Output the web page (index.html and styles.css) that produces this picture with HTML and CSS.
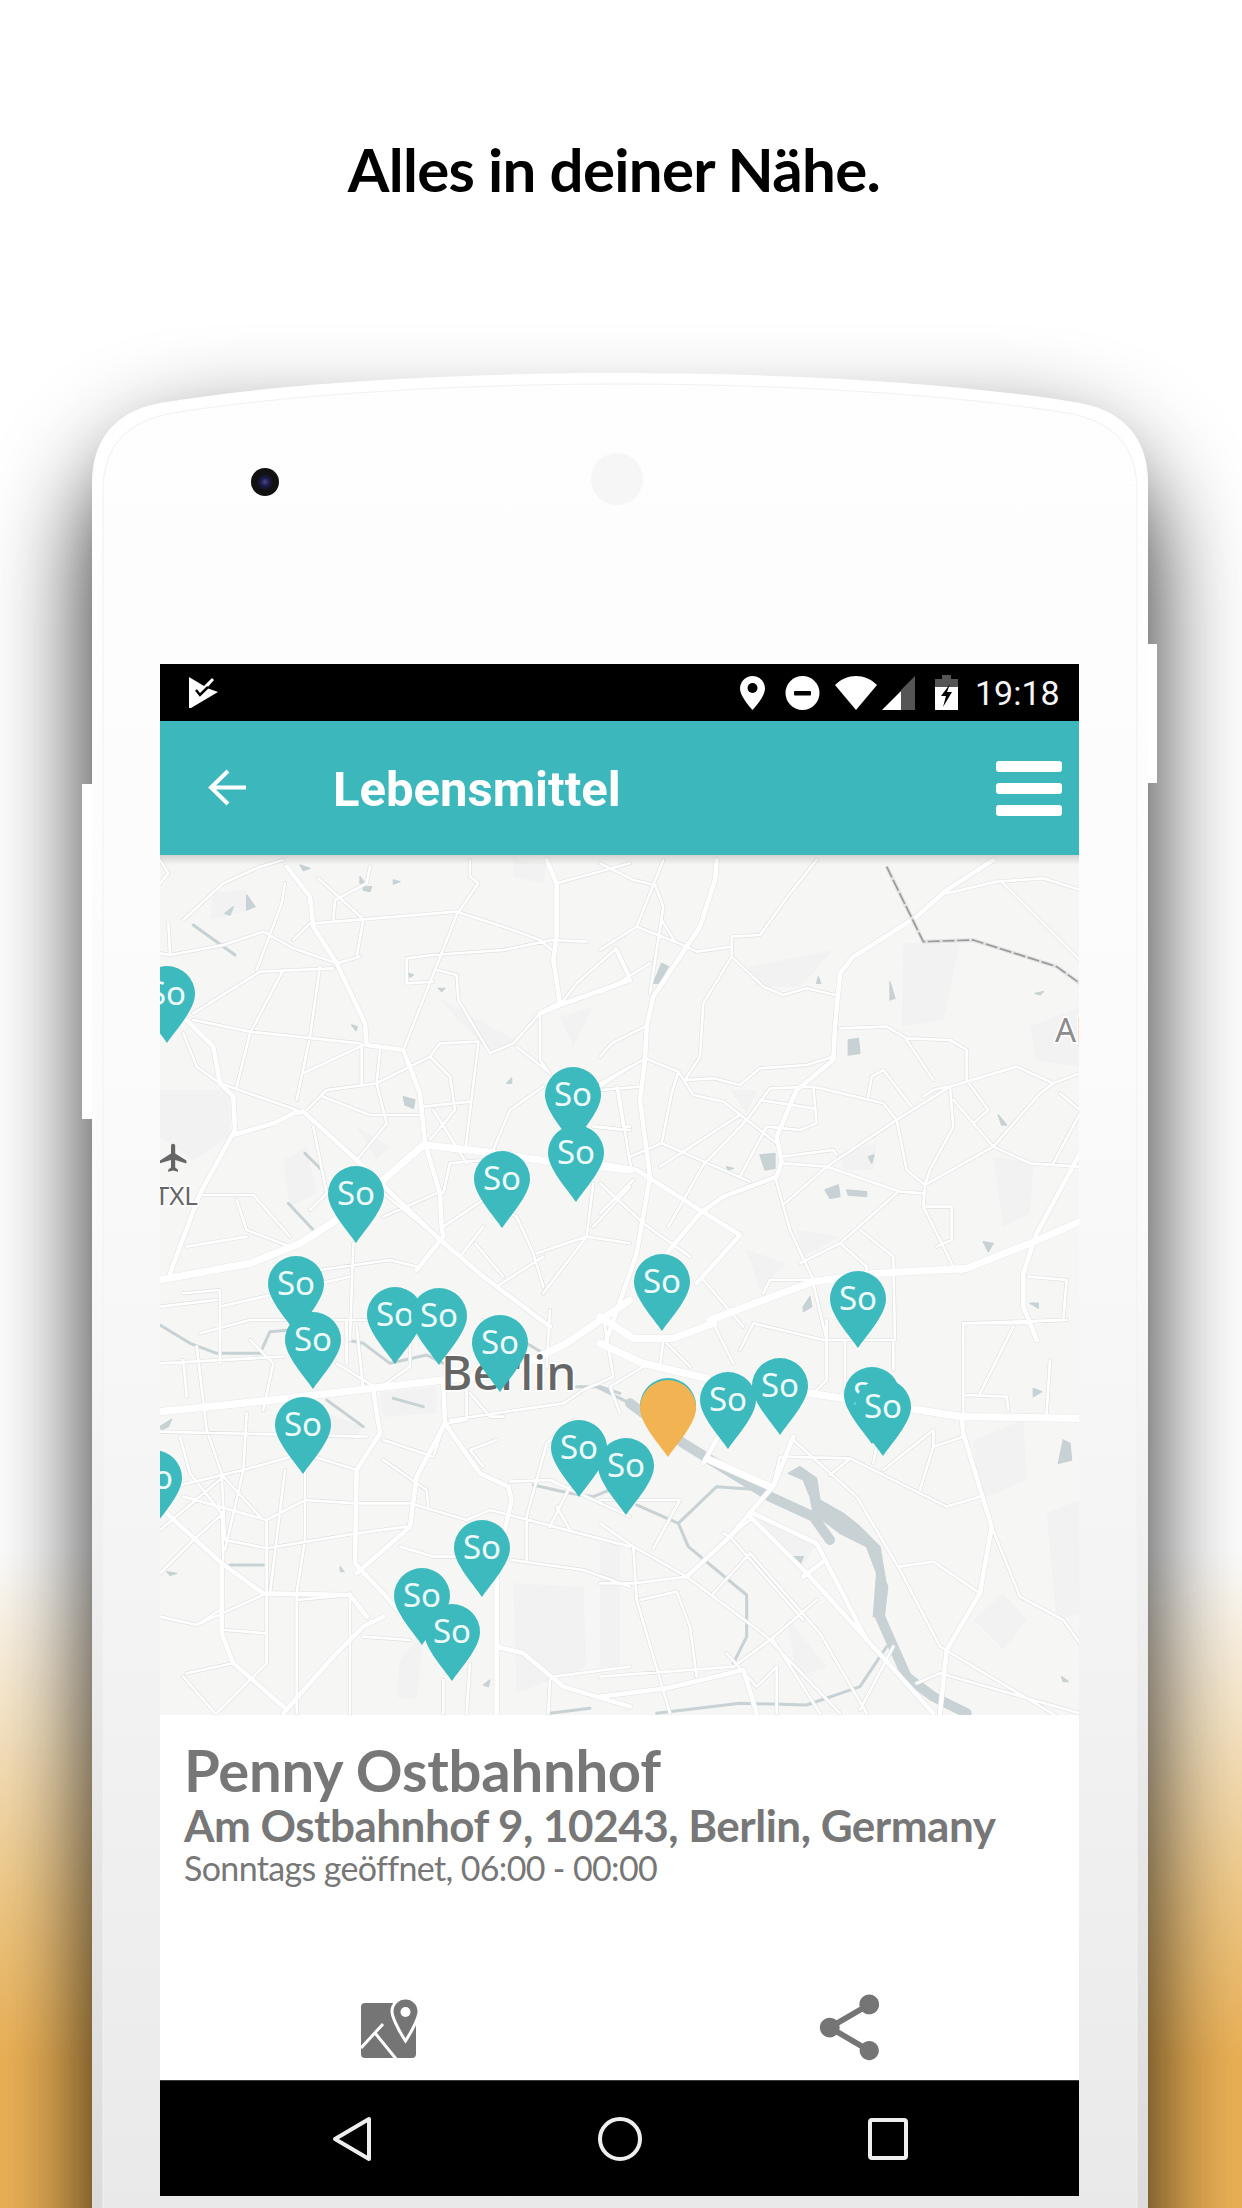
FILE: index.html
```html
<!DOCTYPE html>
<html lang="de">
<head>
<meta charset="utf-8">
<title>Alles in deiner Nähe.</title>
<link rel="stylesheet" href="styles.css">
</head>
<body>
<div class="page">
  <h1 class="headline">Alles in deiner Nähe.</h1>
  <div class="phone">
    <div class="phone-shadow"></div>
    <div class="side-btn side-btn-left"></div>
    <div class="side-btn side-btn-right"></div>
    <svg class="phone-body" width="1056" height="1900" viewBox="0 0 1056 1900">
      <defs>
        <linearGradient id="rimGrad" x1="0" y1="0" x2="0" y2="1">
          <stop offset="0" stop-color="#ffffff"/>
          <stop offset="0.45" stop-color="#fafafa"/>
          <stop offset="0.75" stop-color="#e8e8e8"/>
          <stop offset="1" stop-color="#d9d9d9"/>
        </linearGradient>
        <linearGradient id="bodyGrad" x1="0" y1="0" x2="0" y2="1">
          <stop offset="0" stop-color="#fefefe"/>
          <stop offset="0.35" stop-color="#fbfbfb"/>
          <stop offset="0.7" stop-color="#f2f2f2"/>
          <stop offset="1" stop-color="#e8e8e8"/>
        </linearGradient>
      </defs>
      <path class="rim" d="M0 1900V110C0 75 15 40 68 30C200 8 380 0 528 0C676 0 856 8 988 30C1041 40 1056 75 1056 110V1900Z"/>
      <path class="inner" d="M11 1900V118C11 82 26 52 75 41C200 20 380 11 528 11C676 11 856 20 981 41C1030 52 1045 82 1045 118V1900Z"/>
    </svg>
    <div class="camera"></div>
    <div class="sensor"></div>

    <div class="screen">
      <div class="status-bar">
        <svg class="st-logo" width="30" height="32" viewBox="0 0 30 32">
          <path class="ic-white" d="M0 0L15 9L23 1L25 3L18 11L29 15L2 31L0 31Z"/>
          <path class="ic-cut" d="M7 13L11 18L19 10"/>
        </svg>
        <div class="st-spacer"></div>
        <svg class="st-pin" width="25" height="34" viewBox="0 0 25 34">
          <path class="ic-white" d="M12.5 0C5.6 0 0 5.6 0 12.5C0 21 12.5 34 12.5 34S25 21 25 12.5C25 5.6 19.4 0 12.5 0Z"/>
          <circle class="ic-black" cx="12.5" cy="12" r="5"/>
        </svg>
        <svg class="st-dnd" width="35" height="34" viewBox="0 0 35 34">
          <circle class="ic-white" cx="17.5" cy="17" r="17"/>
          <rect class="ic-black" x="9" y="15" width="17" height="4.5" rx="1"/>
        </svg>
        <svg class="st-wifi" width="42" height="34" viewBox="0 0 42 34">
          <path class="ic-white" d="M0 9C12 -3 30 -3 42 9L21 34Z"/>
        </svg>
        <svg class="st-signal" width="33" height="34" viewBox="0 0 33 34">
          <path class="ic-gray" d="M33 0V34H19V14Z"/>
          <path class="ic-white" d="M19 15V34H0Z"/>
        </svg>
        <svg class="st-batt" width="23" height="35" viewBox="0 0 23 35">
          <rect class="ic-gray" x="7" y="0" width="9" height="5"/>
          <rect class="ic-gray" x="0" y="4" width="23" height="9"/>
          <rect class="ic-white" x="0" y="12" width="23" height="23"/>
          <path class="ic-black" d="M15 9L6 21L11 21L8 32L17 17L12 17Z"/>
        </svg>
        <span class="st-time">19:18</span>
      </div>

      <div class="app-bar">
        <svg class="back-arrow" width="38" height="37" viewBox="0 0 38 37">
          <path d="M38 18.5H4M20 2L3 18.5L20 35"/>
        </svg>
        <span class="app-title">Lebensmittel</span>
        <div class="burger"><i></i><i></i><i></i></div>
      </div>

      <div class="map">
        <svg class="map-svg" width="919" height="860" viewBox="160 855 919 860">
          <defs>
            <g id="parks">
              <path transform="translate(150,860) scale(.3333)" d="M190 100L290 90L300 150L180 180ZM30 690L240 690L240 830L130 900L30 830ZM400 900L470 860L500 1000L420 1040ZM620 800L720 860L680 900ZM1090 0L1190 10L1180 70L1090 50ZM1230 470L1330 440L1270 560ZM860 410L1020 500L1100 540L1020 580Z"/>
              <path transform="translate(600,860) scale(.3333)" d="M910 250L1080 250L1030 480L905 500ZM450 320L700 270L600 380L470 380ZM1180 890L1300 910L1290 1060L1210 1100ZM590 1110L720 1130L610 1190ZM440 1170L560 1210L480 1290ZM390 690L470 690L440 760ZM720 880L830 850L820 930L730 930ZM1290 500L1440 440L1440 620L1310 600Z"/>
              <path transform="translate(150,1300) scale(.3333)" d="M690 280L860 260L860 340L700 350ZM530 340L640 380L610 420L540 410ZM1090 850L1300 860L1310 1100L1100 1180ZM750 1080L820 1000L800 1200L740 1190Z"/>
              <path transform="translate(600,1300) scale(.3333)" d="M0 730L60 730L60 1100L0 1100ZM470 650L650 730L600 810ZM1120 420L1270 360L1280 540L1140 600ZM1340 640L1440 600L1440 940L1370 960ZM1120 960L1210 880L1280 960L1210 1050ZM560 950L680 1100L590 1130Z"/>
            </g>
            <g id="lakes">
              <path transform="translate(150,860) scale(.3333)" d="M225 160L250 140L240 165ZM290 105L315 140L290 150ZM630 50L645 70L630 70ZM640 80L665 80L660 95L640 90ZM730 60L750 65L730 72ZM450 15L480 25L460 32ZM760 710L795 720L790 745L765 735ZM605 495L622 500L618 512ZM1070 670L1085 655L1085 670ZM775 340L790 345L780 352ZM865 385L885 385L875 395Z"/>
              <path transform="translate(600,860) scale(.3333)" d="M160 370L185 310L205 320L175 370ZM745 540L775 535L780 580L745 585ZM480 885L525 880L525 925L495 930ZM675 990L715 975L720 1010L690 1015ZM740 990L800 995L800 1010L745 1005ZM870 365L885 415L870 420ZM1150 1145L1180 1150L1165 1175ZM610 1340L630 1310L635 1340L610 1355ZM655 350L662 370L650 370ZM1305 400L1330 395L1320 405ZM1195 765L1220 795L1205 795ZM805 890L822 885L815 910ZM1290 1330L1315 1330L1315 1345ZM380 920L400 925L385 930Z"/>
              <path transform="translate(150,1300) scale(.3333)" d="M30 380L65 358L55 380L35 390ZM50 815L80 820L60 826ZM570 800L582 815L572 815ZM1000 1155L1020 1140L1015 1160Z"/>
              <path transform="translate(600,1300) scale(.3333)" d="M560 770L610 770L600 795ZM1375 490L1390 420L1410 430L1415 480ZM1300 265L1325 275L1300 290ZM1385 1130L1405 1145L1390 1145Z"/>
            </g>
            <g id="rivers">
              <path transform="translate(150,1300) scale(.3333)" d="M30 75L120 130L200 160L330 160L360 95L420 90M590 120L640 130L720 190L830 165L880 190M1130 130L1180 160M1150 555L1260 580L1330 590L1380 570M240 795L340 795M530 300L640 380M730 295L820 320M1280 260L1340 260L1440 310M1200 1240L1320 1225"/>
              <path transform="translate(600,1300) scale(.3333)" d="M110 615L235 670L265 740L440 885L440 1010L400 1090M235 670L350 560L490 570M860 1040L780 1160L620 1215L420 1210L170 1240M0 260L60 280"/>
              <path transform="translate(150,860) scale(.3333)" d="M415 1030L490 1110M130 195L255 285M465 880L515 930"/>
            </g>
            <g id="riverswide">
              <path transform="translate(600,1300) scale(.3333)" d="M90 310L250 430L510 590L640 650L690 720M850 860L840 950L880 1040L920 1130L1000 1190L1100 1240"/>
            </g>
            <path id="lakeBig" transform="translate(600,1300) scale(.3333)" d="M565 520L600 500L650 535L660 600L730 640L780 680L840 740L860 860L850 950L820 950L830 820L800 740L720 700L640 640L630 590L610 540Z"/>
            <g id="thin">
              <path transform="translate(150,860) scale(.3333)" d="M30 280L60 285L220 255L340 215L430 265L560 310L630 290M100 180L220 70L330 20L400 0M55 190L60 280M505 55L640 178M550 180L555 120L650 70L660 20M490 190L640 178L920 155L1060 200L1170 240L1205 270M640 178L620 290M405 70L395 130L320 330M400 330L300 520L260 680M430 240L480 190M130 460L330 335L550 325M130 480L300 515L630 550M510 320L480 530L440 720M460 640L640 555M635 555L635 670M690 570L680 670L710 790L620 900M470 750L530 690L680 670L840 590L870 550L985 545M520 710L660 765L820 765M820 740L960 725M840 590L900 650L915 750L840 840M850 750L950 910M985 550L945 880M920 165L760 570M770 370L770 295L850 285L1060 270L1205 240L1310 245M770 370L850 365M860 330L920 345L925 420L1020 580L1090 550L1170 460M1100 560L1200 640M1230 435L1280 370L1400 265L1440 350M1030 870L1080 750L1180 680M100 520L140 620L210 670L440 750M1170 460L1170 600L1200 640M1220 70L1440 10M1350 670L1440 620M960 0L960 50L985 70L920 165M150 1005L310 1005L420 1130M260 1020L290 1110L420 1160M110 1160L290 1130M480 1050L540 990M490 800L530 1000M700 1000L860 1130M880 1100L1000 1020L1100 1070M930 1190L1000 1100M975 1150L1060 1250M880 1000L900 910L1000 900M700 1070L860 1000M610 1150L600 1440M1100 1070L1150 1180L1180 1280M1160 1180L1310 1130L1440 1150M1040 1280L1180 1190M1330 970L1310 1130L1180 1300M1330 1100L1440 980M100 1300L210 1290L210 1440M510 1230L720 1200L800 1220M210 1340L600 1250M30 1340L200 1320M1400 680L1420 800L1440 800M1330 800L1440 810M30 0L55 40L30 70"/>
              <path transform="translate(600,860) scale(.3333)" d="M0 10L100 60L165 75L190 140L150 400M190 0L160 75L110 200L0 270M110 200L225 245L290 275L395 260L395 230L480 225L570 100L650 0M395 260L395 290L310 430L300 590L255 660M45 265L85 350L0 400M85 350L150 310M395 290L490 380L550 405L620 385L705 405M185 180L225 245M0 590L35 550L135 500M0 680L60 640L135 595L235 635L280 705L370 725L530 850M255 660L340 655L420 675L480 625L620 615L700 590M235 635L215 700L185 850L90 890M55 685L85 880L95 930M0 800L65 810M0 690L120 680M420 765L180 920M510 685L440 780L310 915L205 1100M480 720L640 745M510 685L640 680L850 730L890 780L920 930L975 975L970 1040L1060 1220L1085 1240M640 680L650 790L600 810L500 800L420 950M185 850L450 965M545 890L700 870L710 885M550 910L680 920L900 995L975 1000M525 950L570 1110L640 1260M555 1030L680 920L890 780L1050 680L1250 620L1360 670L1440 640M1050 680L1060 800L990 930L975 975L1180 860L1320 700L1360 670M1100 660L1165 750L1120 790L1060 720M1120 790L1180 860L1290 910L1440 920M920 540L1000 660M720 505L860 500L920 535L1050 540L1100 570L1100 660M805 710L815 650L850 630L935 740M780 1110L880 1190L885 1440M970 1040L1055 1040L1055 1140L1010 1160M490 1300L510 1260L640 1260M640 1270L680 1440M1090 1390L1280 1390M1285 1250L1400 1260L1390 1380L1280 1385M1040 100L1190 65L1330 55L1440 90M1210 70L1340 200L1440 300M600 1210L720 1150L890 1000M720 1150L800 1220L800 1235M0 970L130 1090L270 1190M0 1060L100 960M310 1260L430 1400M970 710L1000 690L1040 680M1380 700L1440 750M1360 910L1440 760"/>
              <path transform="translate(150,1300) scale(.3333)" d="M30 190L400 170M100 180L110 290M30 395L650 410M90 410L120 520L215 640L220 780M170 390L215 520L225 720M290 340L280 510L225 750M30 570L280 510L460 460L620 510M30 690L220 530L330 650M405 510L360 880M465 520L465 720L440 880L440 1240M100 590L350 660L465 600L620 610L780 610L950 660L1020 630L1250 690L1440 740M225 720L350 745L620 700L770 680M350 660L350 880M30 820L130 720L220 640M1085 780L1300 810L1440 860M750 740L850 770L950 770M1130 780L1130 650L1190 430L1270 360M1200 680L1260 560M1080 545L1200 540L1440 650M950 260L950 360L890 370M900 360L1240 310L1300 270M30 950L140 975L210 930M140 975L350 880M225 990L350 1000M350 880L350 1090L200 1240M110 1120L250 1090M100 1130L195 1240M600 880L600 1240M440 900L600 885M640 1010L780 1020M950 1240L960 1090M1210 1130L1440 1100M1195 1240L1200 1140M880 1240L880 1140M300 120L370 190L340 330M560 190L640 240L690 270M960 280L1020 350L1060 350M700 420L850 470L880 380M700 480L830 570L835 620M140 140L170 390M210 60L210 190M620 80L640 270M1000 500L960 450L1040 420M1220 620L1260 690M150 100L300 60L590 60L850 60M590 60L590 190M780 60L780 200L680 270M1000 60L1060 230M1200 30L1190 200M1360 50L1390 230L1300 270"/>
              <path transform="translate(600,1300) scale(.3333)" d="M540 470L750 475L1040 620L1140 590M540 470L520 550M690 525L745 480M580 420L770 590L900 810L1020 1040L1440 1290M900 800L1000 785L1140 880M960 570L1000 440L1090 410M1000 440L1000 390L850 510M820 490L830 440M1175 680L1260 890L1390 960L1440 1030M0 670L100 740L260 830L500 1010L720 1240M100 740L110 900L210 1240M0 850L100 850L260 830M120 900L230 875L270 980L290 1130M650 900L510 1020L400 1100L0 1130M520 1020L660 1240M430 1110L470 1240M340 880L450 760L660 1000L800 1240M390 710L610 960M240 600L160 745M0 600L240 600M950 1150L1020 1120L1440 1240M1350 180L1340 340M1240 80L1140 280M1090 285L1220 290L1225 330M1090 70L1090 350M1090 70L1400 60M880 120L880 210M735 120L735 300M680 60L680 240L640 280M420 150L460 70L670 120L880 120M190 120L180 200M200 130L270 200M400 190L340 70M530 1240L530 1100L470 1160L380 1060M370 700L390 710L450 660M880 1040L780 1230M60 340L30 260L130 200"/>
            </g>
            <g id="med">
              <path transform="translate(150,860) scale(.3333)" d="M410 20L480 110L490 200L560 310L645 490L650 555L760 570L810 700L825 850L870 1000L875 1100L880 1130M110 480L190 560L210 670L250 710L255 810L150 1000L60 1240M250 825L370 790L430 760L460 755L620 900L860 1130L1000 1250L1200 1400M1190 0L1220 70L1220 230L1210 300L1230 430L1170 460M1170 460L1230 435L1440 360M800 1230L880 1130"/>
              <path transform="translate(600,860) scale(.3333)" d="M350 0L345 60L300 200L160 410L140 500L135 600L120 720L150 950L110 1180L20 1440M1180 0L1040 90L950 170L760 290L720 340L705 500L700 600L590 690L530 830L545 905L530 950L370 1010L300 1060L200 1180M0 910L110 930L300 1050L420 1125L290 1270M1440 880L1310 1120L1270 1240L1270 1340L1310 1440"/>
              <path transform="translate(150,1300) scale(.3333)" d="M670 270L690 400L620 510L615 790L700 880L760 950M880 240L885 370L990 520L1075 560L1085 600L1040 800L1040 1240M885 370L800 530L780 680L620 820M50 640L215 790L340 880L600 885L650 950M215 790L215 1000L250 1090L400 1220M400 1240L550 1070L640 980L700 950M1040 1040L1120 1060L1240 1160L1440 1220"/>
              <path transform="translate(600,1300) scale(.3333)" d="M450 650L630 830L1000 1240M510 570L440 650L390 710L260 830M460 640L650 730L800 1020M0 1190L200 1165L430 1110L470 1240M1085 350L1090 400L1175 680L1140 880L1040 1050L1020 1240M580 410L520 560M360 400L310 490M610 830L670 785"/>
            </g>
            <g id="big">
              <path transform="translate(150,860) scale(.3333)" d="M30 1260L300 1210L450 1150L560 1080L700 960L820 855L1000 875L1200 905L1440 930"/>
              <path transform="translate(600,860) scale(.3333)" d="M330 1380L640 1265L830 1240L1100 1225L1290 1150L1440 1085"/>
              <path transform="translate(150,1300) scale(.3333)" d="M30 335L370 300L665 265L880 240L1050 225L1250 130L1440 0"/>
              <path transform="translate(600,1300) scale(.3333)" d="M0 130L130 190L320 235M0 50L100 115L220 115L340 70M630 280L730 295L1085 350L1440 355M330 480L510 560"/>
            </g>
            <path id="pinShape" d="M0 0C-8 -12 -28 -33 -28 -49A28 28 0 1 1 28 -49C28 -33 8 -12 0 0Z"/>
          </defs>

          <rect class="map-bg" x="160" y="855" width="919" height="860"/>
          <use href="#parks" class="m-park"/>
          <use href="#lakes" class="m-water"/>
          <use href="#rivers" class="m-river"/>
          <use href="#riverswide" class="m-river-wide"/>
          <use href="#lakeBig" class="m-water"/>
          <use href="#thin" class="c-thin"/>
          <use href="#med" class="c-med"/>
          <use href="#big" class="c-big"/>
          <use href="#thin" class="r-thin"/>
          <use href="#med" class="r-med"/>
          <use href="#big" class="r-big"/>
          <path class="m-border-halo" transform="translate(600,860) scale(.3333)" d="M860 20L970 245L1120 240L1370 320L1440 370"/>
          <path class="m-border" transform="translate(600,860) scale(.3333)" d="M860 20L970 245L1120 240L1370 320L1440 370"/>

          <path class="m-plane" transform="translate(157,1141) scale(1.4)" d="M21 16v-2l-8-5V3.5c0-.83-.67-1.5-1.5-1.5S10 2.67 10 3.5V9l-8 5v2l8-2.5V19l-2 1.5V22l3.5-1 3.5 1v-1.5L13 19v-5.5l8 2.5z"/>
          <text class="m-label m-txl" x="198" y="1205">TXL</text>
          <text class="m-label m-ah" x="1055" y="1042">Ah</text>
          <text class="m-label m-berlin" x="441" y="1390">Berlin</text>

          <g transform="translate(167,1043)"><use href="#pinShape" class="pin"/><text class="pin-t" y="-38">So</text></g>
          <g transform="translate(573,1144)"><use href="#pinShape" class="pin"/><text class="pin-t" y="-38">So</text></g>
          <g transform="translate(576,1202)"><use href="#pinShape" class="pin"/><text class="pin-t" y="-38">So</text></g>
          <g transform="translate(502,1228)"><use href="#pinShape" class="pin"/><text class="pin-t" y="-38">So</text></g>
          <g transform="translate(356,1243)"><use href="#pinShape" class="pin"/><text class="pin-t" y="-38">So</text></g>
          <g transform="translate(662,1331)"><use href="#pinShape" class="pin"/><text class="pin-t" y="-38">So</text></g>
          <g transform="translate(858,1348)"><use href="#pinShape" class="pin"/><text class="pin-t" y="-38">So</text></g>
          <g transform="translate(296,1333)"><use href="#pinShape" class="pin"/><text class="pin-t" y="-38">So</text></g>
          <g transform="translate(395,1364)"><use href="#pinShape" class="pin"/><text class="pin-t" y="-38">So</text></g>
          <g transform="translate(439,1365)"><use href="#pinShape" class="pin"/><text class="pin-t" y="-38">So</text></g>
          <g transform="translate(313,1389)"><use href="#pinShape" class="pin"/><text class="pin-t" y="-38">So</text></g>
          <g transform="translate(500,1392)"><use href="#pinShape" class="pin"/><text class="pin-t" y="-38">So</text></g>
          <g transform="translate(303,1474)"><use href="#pinShape" class="pin"/><text class="pin-t" y="-38">So</text></g>
          <g transform="translate(668,1455)"><use href="#pinShape" class="pin"/></g>
          <g transform="translate(668,1457)"><use href="#pinShape" class="pin-active"/></g>
          <g transform="translate(780,1435)"><use href="#pinShape" class="pin"/><text class="pin-t" y="-38">So</text></g>
          <g transform="translate(728,1449)"><use href="#pinShape" class="pin"/><text class="pin-t" y="-38">So</text></g>
          <g transform="translate(872,1444)"><use href="#pinShape" class="pin"/><text class="pin-t" y="-38">So</text></g>
          <g transform="translate(883,1456)"><use href="#pinShape" class="pin"/><text class="pin-t" y="-38">So</text></g>
          <g transform="translate(579,1497)"><use href="#pinShape" class="pin"/><text class="pin-t" y="-38">So</text></g>
          <g transform="translate(626,1515)"><use href="#pinShape" class="pin"/><text class="pin-t" y="-38">So</text></g>
          <g transform="translate(154,1527)"><use href="#pinShape" class="pin"/><text class="pin-t" y="-38">So</text></g>
          <g transform="translate(482,1597)"><use href="#pinShape" class="pin"/><text class="pin-t" y="-38">So</text></g>
          <g transform="translate(422,1645)"><use href="#pinShape" class="pin"/><text class="pin-t" y="-38">So</text></g>
          <g transform="translate(452,1681)"><use href="#pinShape" class="pin"/><text class="pin-t" y="-38">So</text></g>
        </svg>
        <div class="map-topshade"></div>
      </div>

      <div class="details">
        <div class="info">
          <div class="info-name">Penny Ostbahnhof</div>
          <div class="info-addr">Am Ostbahnhof 9, 10243, Berlin, Germany</div>
          <div class="info-hours">Sonntags geöffnet, 06:00 - 00:00</div>
        </div>
        <div class="actions">
          <svg class="act-map" width="58" height="60" viewBox="0 0 58 60">
            <rect class="ic-grey" x="0" y="5" width="55" height="55" rx="4"/>
            <path class="act-line" d="M0 50L22 26M14 35L36 62"/>
            <path class="act-pin" d="M44.5 0C37 0 31 6 31 13.5C31 22 44.5 43 44.5 43S58 22 58 13.5C58 6 52 0 44.5 0Z"/>
            <circle class="act-hole" cx="44.5" cy="14" r="5"/>
          </svg>
          <svg class="act-share" width="79" height="79" viewBox="0 0 24 24">
            <path class="ic-grey" d="M18 16.08c-.76 0-1.44.3-1.96.77L8.91 12.7c.05-.23.09-.46.09-.7s-.04-.47-.09-.7l7.05-4.11c.54.5 1.25.81 2.04.81 1.66 0 3-1.34 3-3s-1.34-3-3-3-3 1.34-3 3c0 .24.04.47.09.7L8.04 9.81C7.5 9.31 6.79 9 6 9c-1.66 0-3 1.34-3 3s1.34 3 3 3c.79 0 1.5-.31 2.04-.81l7.12 4.16c-.05.21-.08.43-.08.65 0 1.61 1.31 2.92 2.92 2.92 1.61 0 2.92-1.31 2.92-2.92s-1.31-2.92-2.92-2.92z"/>
          </svg>
        </div>
      </div>

      <div class="nav-bar">
        <svg width="40" height="46" viewBox="0 0 40 46"><path class="nav-ic" d="M37 3V43L3 23Z"/></svg>
        <svg width="44" height="46" viewBox="0 0 44 46"><circle class="nav-ic" cx="22" cy="23" r="20"/></svg>
        <svg width="40" height="42" viewBox="0 0 40 42"><rect class="nav-ic" x="2" y="2" width="36" height="38" rx="2"/></svg>
      </div>
    </div>
  </div>
</div>
</body>
</html>
```

FILE: styles.css
```css
* { box-sizing: border-box; }
html, body { margin: 0; padding: 0; }
body { width: 1242px; height: 2208px; overflow: hidden; background: #fff; }

.page {
  position: relative;
  width: 1242px;
  height: 2208px;
  overflow: hidden;
  background: linear-gradient(180deg, #fff 0, #fff 1550px, #f8e6c6 1720px, #f1c985 1900px, #edb256 2060px, #edb256 2208px);
}

.headline {
  margin: 0;
  width: 1228px;
  height: 373px;
  padding-top: 133px;
  text-align: center;
  font: 700 60px/72px "Lato", sans-serif;
  letter-spacing: -.7px;
  color: #000;
}

.phone {
  position: relative;
  width: 1056px;
  height: 1835px;
  margin-left: 92px;
  padding: 291px 0 0 68px;
}
.phone-shadow {
  position: absolute;
  left: 0;
  right: 0;
  top: 70px;
  bottom: -200px;
  border-radius: 120px;
  box-shadow: 0 0 100px rgba(0, 0, 0, .88);
}
.side-btn { position: absolute; background: #fff; }
.side-btn-left { left: -10px; top: 411px; width: 10px; height: 335px; }
.side-btn-right { right: -9px; top: 271px; width: 9px; height: 139px; }
.phone-body { position: absolute; left: 0; top: 0; }
.rim { fill: url(#rimGrad); }
.inner { fill: url(#bodyGrad); stroke: #f1f1f1; stroke-width: 1; }

.camera {
  position: absolute;
  left: 159px;
  top: 95px;
  width: 28px;
  height: 28px;
  border-radius: 50%;
  background: radial-gradient(circle at 50% 50%, #4a4a78 0, #1c1c54 20%, #111 42%, #111 100%);
}
.sensor {
  position: absolute;
  left: 499px;
  top: 80px;
  width: 52px;
  height: 52px;
  border-radius: 50%;
  background: #f6f6f6;
}

.screen {
  position: relative;
  width: 919px;
  display: flex;
  flex-direction: column;
}

/* status bar */
.status-bar {
  height: 57px;
  background: #000;
  display: flex;
  align-items: center;
  padding: 0 21px 0 29px;
  flex: none;
}
.st-spacer { flex: 1; }
.st-dnd { margin-left: 20px; }
.st-wifi { margin-left: 15px; }
.st-signal { margin-left: 5px; }
.st-batt { margin-left: 20px; }
.st-time {
  margin-left: 17px;
  width: 83px;
  font: 400 34px/40px "Roboto", sans-serif;
  color: #f5f5f5;
  white-space: nowrap;
}
.ic-white { fill: #fff; }
.ic-black { fill: #000; }
.ic-gray { fill: #555; }
.ic-cut { fill: none; stroke: #000; stroke-width: 2.5; }
.ic-grey { fill: #757575; }

/* app bar */
.app-bar {
  height: 134px;
  background: #3cb8bd;
  display: flex;
  align-items: center;
  padding: 0 17px 0 48px;
  flex: none;
  position: relative;
  z-index: 1;
}
.back-arrow { flex: none; margin-top: -1px; }
.back-arrow path { fill: none; stroke: #fff; stroke-width: 4; }
.app-title {
  margin-left: 87px;
  margin-top: 3px;
  flex: 1;
  font: 700 49px/56px "Roboto", sans-serif;
  color: #fff;
}
.burger { display: flex; flex-direction: column; gap: 11px; width: 66px; margin-top: 1px; }
.burger i { display: block; height: 11px; border-radius: 3px; background: #fff; }

/* map */
.map {
  position: relative;
  height: 860px;
  overflow: hidden;
  flex: none;
  background: #f5f5f4;
}
.map-svg { display: block; }
.map-topshade {
  position: absolute;
  left: 0;
  right: 0;
  top: 0;
  height: 10px;
  background: linear-gradient(180deg, rgba(0,0,0,.14), rgba(0,0,0,0));
}
.map-bg { fill: #f6f6f5; }
.m-park { fill: #f1f2f1; }
.m-water { fill: #c8d1d4; stroke: #c8d1d4; stroke-width: 4; stroke-linejoin: round; }
.m-river { fill: none; stroke: #c8d1d4; stroke-width: 9; stroke-linejoin: round; stroke-linecap: round; }
.m-river-wide { fill: none; stroke: #c8d1d4; stroke-width: 30; stroke-linejoin: round; stroke-linecap: round; }
.c-thin { fill: none; stroke: #dfe2e2; stroke-width: 12; stroke-linejoin: round; stroke-linecap: round; }
.r-thin { fill: none; stroke: #fff; stroke-width: 8; stroke-linejoin: round; stroke-linecap: round; }
.c-med { fill: none; stroke: #dfe2e2; stroke-width: 17; stroke-linejoin: round; stroke-linecap: round; }
.r-med { fill: none; stroke: #fff; stroke-width: 14; stroke-linejoin: round; stroke-linecap: round; }
.c-big { fill: none; stroke: #e6e8e8; stroke-width: 25; stroke-linejoin: round; stroke-linecap: round; }
.r-big { fill: none; stroke: #fff; stroke-width: 22; stroke-linejoin: round; stroke-linecap: round; }
.m-border-halo { fill: none; stroke: #e4e4e4; stroke-width: 12; }
.m-border { fill: none; stroke: #9a9a9a; stroke-width: 5; stroke-dasharray: 36 8; }
.m-plane { fill: #666; }
.m-label { font-family: "Noto Sans", "Open Sans", sans-serif; paint-order: stroke; stroke: #fff; stroke-width: 3px; }
.m-txl { font-size: 26px; fill: #666; text-anchor: end; }
.m-ah { font-size: 33px; fill: #8c8c8c; }
.m-berlin { font-size: 48px; font-weight: 500; fill: #666; }

.pin { fill: #3cbabe; }
.pin-active { fill: #f2b453; }
.pin-t {
  font: 400 33px "Noto Sans", "Open Sans", sans-serif;
  fill: #eefafa;
  text-anchor: middle;
}

/* details */
.details {
  height: 365px;
  background: #fff;
  flex: none;
  display: flex;
  flex-direction: column;
  justify-content: space-between;
  padding: 25px 0 13px;
}
.info { padding-left: 24px; color: #777; font-family: "Lato", sans-serif; }
.info-name { font-weight: 700; font-size: 58px; line-height: 60px; letter-spacing: -.25px; }
.info-addr { font-weight: 700; font-size: 44px; line-height: 50px; letter-spacing: -.5px; }
.info-hours { font-weight: 400; font-size: 34px; line-height: 36px; letter-spacing: -.65px; }
.actions { display: grid; grid-template-columns: 1fr 1fr; justify-items: center; align-items: center; }
.act-line { fill: none; stroke: #fff; stroke-width: 3; }
.act-pin { fill: #757575; stroke: #fff; stroke-width: 3; }
.act-hole { fill: #fff; }

/* nav */
.nav-bar {
  height: 116px;
  background: #000;
  flex: none;
  display: flex;
  align-items: center;
  justify-content: center;
  gap: 226px;
  border-top: 1px solid #3a3a3a;
}
.nav-ic { fill: none; stroke: #eee; stroke-width: 4; stroke-linejoin: round; }
```
